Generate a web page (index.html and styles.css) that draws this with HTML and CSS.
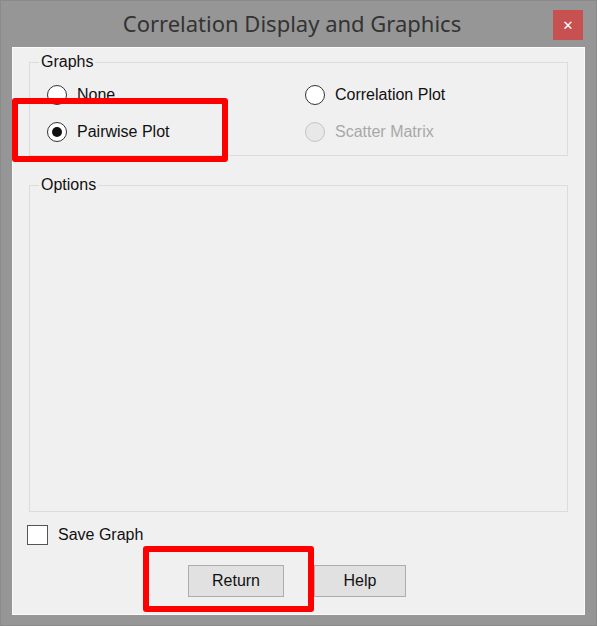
FILE: index.html
```html
<!DOCTYPE html>
<html>
<head>
<meta charset="utf-8">
<link rel="stylesheet" href="styles.css">
</head>
<body>
<div class="window">
  <div class="titlebar">
    <span class="spacer"></span>
    <span class="title">Correlation Display and Graphics</span>
    <span class="close">&#x2715;</span>
  </div>
  <div class="client">
    <fieldset class="group graphs">
      <legend>Graphs</legend>
      <div class="radio-grid">
        <label class="opt"><span class="radio"></span>None</label>
        <label class="opt"><span class="radio"></span>Correlation Plot</label>
        <label class="opt"><span class="radio checked"></span>Pairwise Plot</label>
        <label class="opt disabled"><span class="radio"></span>Scatter Matrix</label>
      </div>
    </fieldset>
    <fieldset class="group options">
      <legend>Options</legend>
    </fieldset>
    <label class="check"><span class="box"></span>Save Graph</label>
    <div class="buttons">
      <span class="btn btn-return">Return</span>
      <span class="btn btn-help">Help</span>
    </div>
  </div>
  <div class="mark mark-1"></div>
  <div class="mark mark-2"></div>
</div>
</body>
</html>
```
FILE: styles.css
```css
html, body {
  margin: 0;
  padding: 0;
}
body {
  width: 597px;
  height: 626px;
  overflow: hidden;
  background: #969696;
  font-family: "Liberation Sans", Arial, sans-serif;
}
.window {
  position: relative;
  width: 597px;
  height: 626px;
  box-sizing: border-box;
  border: 1px solid #8a8a8a;
  display: flex;
  flex-direction: column;
}
.titlebar {
  height: 46px;
  display: grid;
  grid-template-columns: 1fr auto 1fr;
  align-items: center;
  padding-right: 13px;
}
.title {
  font-family: "Noto Sans", "Open Sans", sans-serif;
  font-size: 22px;
  color: #333;
  letter-spacing: 0;
  margin-top: -2px;
}
.close {
  justify-self: end;
  width: 30px;
  height: 30px;
  margin-top: 2px;
  background: #c75050;
  color: #fff;
  font-size: 13px;
  font-weight: bold;
  display: flex;
  align-items: center;
  justify-content: center;
  font-family: "DejaVu Sans", sans-serif;
}
.client {
  flex: 1;
  margin: 0 11px 10px 11px;
  background: #f0f0f0;
  border: 1px solid #fafafa;
  padding: 5px 16px 0 16px;
  color: #111;
  font-size: 16px;
}
.group {
  margin: 0;
  padding: 0;
  border: 1px solid #dcdcdc;
  min-width: 0;
}
.group legend {
  margin-left: 9px;
  padding: 0 2px;
  line-height: 18px;
  height: 18px;
}
.graphs {
  height: 103px;
  box-sizing: border-box;
}
.radio-grid {
  display: grid;
  grid-template-columns: 258px 1fr;
  row-gap: 17px;
  padding: 14px 0 0 17px;
}
.opt {
  display: flex;
  align-items: center;
  gap: 10px;
  height: 20px;
  line-height: 20px;
}
.radio {
  width: 20px;
  height: 20px;
  box-sizing: border-box;
  border-radius: 50%;
  border: 1.5px solid #333;
  background: #fff;
  display: flex;
  align-items: center;
  justify-content: center;
}
.radio.checked::after {
  content: "";
  width: 10px;
  height: 10px;
  border-radius: 50%;
  background: #111;
}
.opt.disabled {
  color: #a8a8a8;
}
.opt.disabled .radio {
  border-color: #c4c4c4;
  background: #e8e8e8;
}
.options {
  margin-top: 20px;
  height: 336px;
  box-sizing: border-box;
}
.check {
  display: flex;
  align-items: center;
  gap: 10px;
  margin: 13px 0 0 -2px;
  height: 20px;
}
.box {
  width: 21px;
  height: 20px;
  box-sizing: border-box;
  border: 1.5px solid #555;
  background: #fff;
}
.buttons {
  display: flex;
  gap: 30px;
  margin: 20px 0 0 159px;
}
.btn {
  height: 32px;
  box-sizing: border-box;
  border: 1.5px solid #adadad;
  background: #e1e1e1;
  display: flex;
  align-items: center;
  justify-content: center;
  font-size: 16px;
  color: #111;
}
.btn-return { width: 96px; }
.btn-help { width: 92px; }
.mark {
  position: absolute;
  border: 6px solid #ff0000;
  border-radius: 3px;
  box-sizing: border-box;
}
.mark-1 {
  left: 11px;
  top: 97px;
  width: 216px;
  height: 64px;
}
.mark-2 {
  left: 142px;
  top: 545px;
  width: 171px;
  height: 66px;
}
```
